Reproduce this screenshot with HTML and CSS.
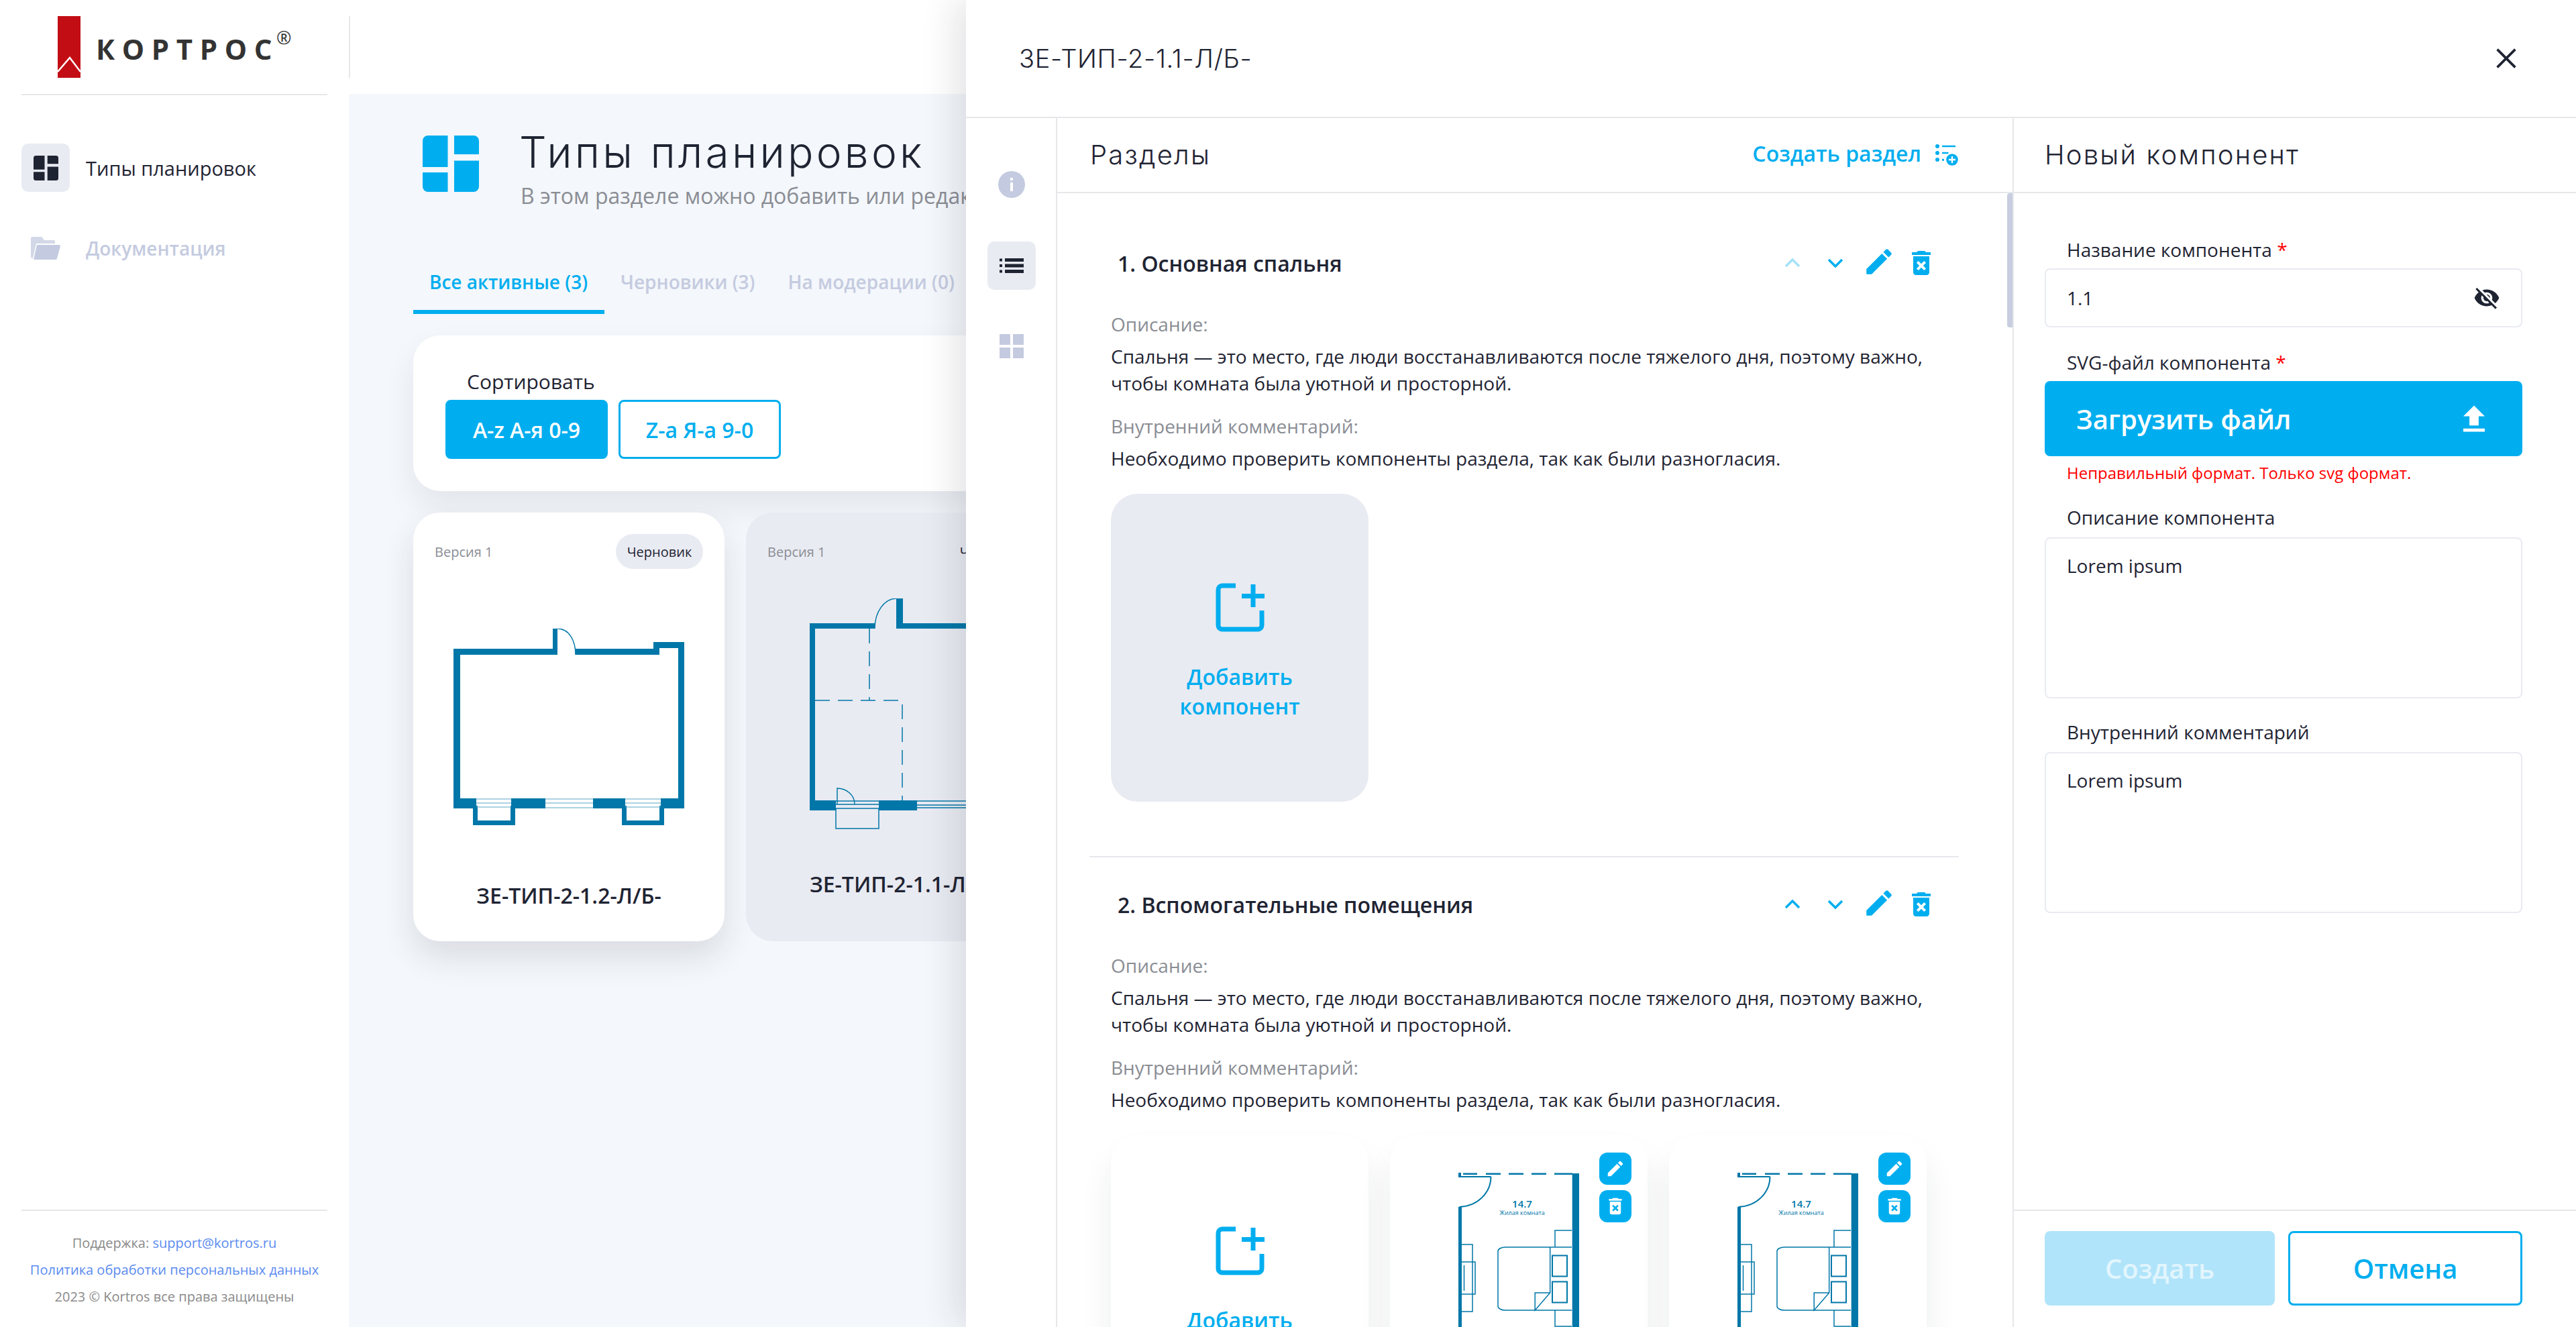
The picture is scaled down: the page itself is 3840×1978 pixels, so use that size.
FILE: index.html
```html
<!DOCTYPE html>
<html lang="ru">
<head>
<meta charset="utf-8">
<title>Типы планировок</title>
<link rel="stylesheet" href="styles.css">
</head>
<body>
<svg class="defs" width="0" height="0">
  <symbol id="i-edit" viewBox="0 0 24 24"><path d="M3 17.25V21h3.75L17.81 9.94l-3.75-3.75L3 17.25zM20.71 7.04c.39-.39.39-1.02 0-1.41l-2.34-2.34c-.39-.39-1.02-.39-1.41 0l-1.83 1.83 3.75 3.75 1.83-1.83z"/></symbol>
  <symbol id="i-del" viewBox="4.5 2.5 15 19"><path d="M6 19c0 1.1.9 2 2 2h8c1.100 0 2-.9 2-2V7H6v12zm2.460-7.120l1.410-1.410L12 12.590l2.120-2.120 1.410 1.410L13.410 14l2.120 2.120-1.410 1.410L12 15.410l-2.120 2.120-1.410-1.410L10.590 14l-2.130-2.120zM15.500 4l-1-1h-5l-1 1H5v2h14V4z"/></symbol>
  <symbol id="i-add" viewBox="0 0 73 73"><path d="M30 4H10a6 6 0 0 0-6 6v53a6 6 0 0 0 6 6h53a6 6 0 0 0 6-6V41" fill="none" stroke="currentColor" stroke-width="7"/><path d="M39 16h34v7H39zM52.500 2h7v34h-7z"/></symbol>
  <symbol id="i-layout" viewBox="0 0 84 84"><path d="M8 0h29.500v47H0V8a8 8 0 0 1 8-8zM47 0h29a8 8 0 0 1 8 8v20H47zM47 37.500h37V76a8 8 0 0 1-8 8H47zM0 55h37.500v29H8a8 8 0 0 1-8-8z"/></symbol>
  <symbol id="i-room" viewBox="0 0 384 300">
    <g fill="none" stroke="#0077a8" stroke-width="2">
      <path d="M102 62h48.500M150.500 62c0 24-20 44-47 45"/>
      <path d="M109 57.700h21M143 57.700h22M177 57.700h22M211 57.700h22M245 57.700h27" stroke-width="2.500"/>
      <path d="M107 163h16v100h-16M107 189h20v48h-20M110.500 194v38" stroke-width="1.500"/>
      <path d="M246 167v-25h25M246 261v24h25M271 167h-99a11 6 0 0 0-11 6v82a11 6 0 0 0 11 6h99M238.700 167v68l-22.500 26v-26h22.500" stroke-width="1.500"/>
      <path d="M242 179.500h22v31h-22zM242 218.500h22v31h-22z"/>
    </g>
    <path d="M102 56h4v7h-4zM102 107h5v193h-5zM271.700 57h10.300v243h-10.300z" fill="#0077a8"/>
  </symbol>
</svg>

<div class="app">
  <aside class="sidebar">
    <div class="logo">
      <svg class="logo-mark" viewBox="0 0 34 92"><rect width="34" height="92" fill="#c30d15"/><path d="M0 83 18 62 34 83" fill="none" stroke="#fff" stroke-width="2.500"/></svg>
      <div class="logo-word">КОРТРОС<span class="logo-reg">®</span></div>
    </div>
    <nav class="nav">
      <a class="nav-item nav-active">
        <span class="nav-box"><svg class="nav-ico-dark"><use href="#i-layout"/></svg></span>
        <span>Типы планировок</span>
      </a>
      <a class="nav-item nav-muted">
        <span class="nav-box nav-box-plain"><svg class="nav-folder" viewBox="0 0 44 34"><path d="M2 0h14l4 5h14a2 2 0 0 1 2 2v3H8L3 32H2a2 2 0 0 1-2-2V2a2 2 0 0 1 2-2z" opacity=".75"/><path d="M9 12h33a2 2 0 0 1 2 2l-5 18a2 2 0 0 1-2 2H4z"/></svg></span>
        <span>Документация</span>
      </a>
    </nav>
    <footer class="side-foot">
      <p>Поддержка: <a class="link">support@kortros.ru</a></p>
      <p><a class="link">Политика обработки персональных данных</a></p>
      <p>2023 © Kortros все права защищены</p>
    </footer>
  </aside>

  <div class="content">
    <div class="topbar"><span class="topbar-rule"></span></div>
    <main class="main">
      <header class="page-head">
        <svg class="page-ico"><use href="#i-layout"/></svg>
        <div>
          <h1 class="page-title">Типы планировок</h1>
          <p class="page-sub">В этом разделе можно добавить или редактировать типы планировок</p>
        </div>
      </header>
      <div class="tabs">
        <a class="tab tab-active">Все активные (3)</a>
        <a class="tab">Черновики (3)</a>
        <a class="tab">На модерации (0)</a>
      </div>
      <section class="sort-card">
        <div class="sort-label">Сортировать</div>
        <div class="sort-btns">
          <button class="sort-btn sort-on">A-z А-я 0-9</button>
          <button class="sort-btn">Z-a Я-а 9-0</button>
        </div>
      </section>
      <div class="cards">
        <article class="card card-white">
          <div class="card-top"><span class="card-ver">Версия 1</span><span class="badge">Черновик</span></div>
          <svg class="plan plan-a" viewBox="676 937 344 293">
            <g fill="#0077a8">
              <path d="M676 967h148v-30h7v39h-145v214h24v15h-34zM858 967h116v-10h46v248h-35v-15h26V966h-28v10h-125zM762 1190h51v15h-51zM884 1190h48v15h-48z"/>
            </g>
            <path d="M831 937c16 0 27 16 27 39" fill="none" stroke="#0077a8" stroke-width="1.500"/>
            <g fill="none" stroke="#0077a8" stroke-width="7">
              <path d="M708.500 1201v25.500h56V1201M930.500 1201v25.500h56V1201"/>
            </g>
            <g fill="none" stroke="#5aa6c6" stroke-width="1.200">
              <path d="M710 1191h52M710 1197h52M710 1203h52M813 1191h71M813 1197h71M813 1204h71M932 1191h53M932 1197h53M932 1203h53"/>
            </g>
          </svg>
          <h3 class="card-name">ЗЕ-ТИП-2-1.2-Л/Б-</h3>
        </article>
        <article class="card card-grey">
          <div class="card-top"><span class="card-ver">Версия 1</span><span class="badge badge-grey">Черновик</span></div>
          <svg class="plan plan-b" viewBox="1207 892 360 344">
            <path fill="#0077a8" d="M1207 929h97v8h-89v256h31v15h-39zM1336 892h10v37h221v8h-221v0h-10zM1310 1193h57v15h-57z"/>
            <g fill="none" stroke="#0077a8" stroke-width="1.500">
              <path d="M1304 937c0-25 14-45 33-45"/>
              <path d="M1246 1205h64v30h-64zM1248 1199v-24c14 0 26 10 26 24M1246 1194h64M1246 1199h64M1367 1194h200M1367 1200h200M1367 1204h200"/>
              <path d="M1296 937v107M1215 1044h130v149" stroke-dasharray="22 12"/>
            </g>
          </svg>
          <h3 class="card-name card-name-b">ЗЕ-ТИП-2-1.1-Л/Б-</h3>
        </article>
      </div>
    </main>
  </div>

  <div class="drawer">
    <header class="drawer-head">
      <h2 class="drawer-title">ЗЕ-ТИП-2-1.1-Л/Б-</h2>
      <svg class="close" viewBox="0 0 28 28"><path d="M1.500 1.500l25 25M26.500 1.500l-25 25" stroke="#1f2433" stroke-width="3.500" fill="none"/></svg>
    </header>
    <div class="drawer-body">
      <div class="rail">
        <svg class="rail-info" viewBox="0 0 40 40"><circle cx="20" cy="20" r="20" fill="#c4cbe0"/><path d="M18 17h4v13h-4zM18 10h4v4h-4z" fill="#fff"/></svg>
        <span class="rail-box"><svg class="rail-list" viewBox="0 0 36 22"><path d="M0 .5h4v4H0zM0 9h4v4H0zM0 17.500h4v4H0zM8 0h28v5H8zM8 8.500h28v5H8zM8 17h28v5H8z"/></svg></span>
        <svg class="rail-grid" viewBox="0 0 36 36"><path d="M0 0h16v16H0zM20 0h16v16H20zM0 20h16v16H0zM20 20h16v16H20z"/></svg>
      </div>

      <div class="sections">
        <div class="subhead">
          <h3 class="subhead-title">Разделы</h3>
          <a class="create-link">Создать раздел
            <svg class="create-ico" viewBox="0 0 34 32"><circle cx="3" cy="3" r="3"/><circle cx="3" cy="13" r="3"/><circle cx="3" cy="23" r="3"/><path d="M10 1.700h20v2.600H10zM10 11.700h9.500v2.600H10zM10 21.800h3v3h-3z"/><circle cx="25" cy="23" r="8.800"/><path d="M23.800 18h2.400v10h-2.400zM20 21.800h10v2.400H20z" fill="#fff"/></svg>
          </a>
        </div>
        <div class="scroll-thumb"></div>
        <div class="sections-list">
          <section class="sec">
            <div class="sec-head">
              <h4 class="sec-title">1. Основная спальня</h4>
              <div class="sec-tools">
                <svg class="chev chev-off" viewBox="0 0 24 14"><path d="M2 12 12 2l10 10" fill="none" stroke="currentColor" stroke-width="3.500"/></svg>
                <svg class="chev" viewBox="0 0 24 14"><path d="M2 2l10 10L22 2" fill="none" stroke="currentColor" stroke-width="3.500"/></svg>
                <svg class="tool-edit"><use href="#i-edit"/></svg>
                <svg class="tool-del"><use href="#i-del"/></svg>
              </div>
            </div>
            <div class="sec-text">
              <p class="muted">Описание:</p>
              <p>Спальня — это место, где люди восстанавливаются после тяжелого дня, поэтому важно,<br>чтобы комната была уютной и просторной.</p>
              <p class="muted gap">Внутренний комментарий:</p>
              <p>Необходимо проверить компоненты раздела, так как были разногласия.</p>
            </div>
            <div class="tiles">
              <a class="tile tile-add tile-grey">
                <svg class="add-ico"><use href="#i-add"/></svg>
                <span>Добавить<br>компонент</span>
              </a>
            </div>
          </section>

          <section class="sec sec-2">
            <div class="sec-head">
              <h4 class="sec-title">2. Вспомогательные помещения</h4>
              <div class="sec-tools">
                <svg class="chev" viewBox="0 0 24 14"><path d="M2 12 12 2l10 10" fill="none" stroke="currentColor" stroke-width="3.500"/></svg>
                <svg class="chev" viewBox="0 0 24 14"><path d="M2 2l10 10L22 2" fill="none" stroke="currentColor" stroke-width="3.500"/></svg>
                <svg class="tool-edit"><use href="#i-edit"/></svg>
                <svg class="tool-del"><use href="#i-del"/></svg>
              </div>
            </div>
            <div class="sec-text">
              <p class="muted">Описание:</p>
              <p>Спальня — это место, где люди восстанавливаются после тяжелого дня, поэтому важно,<br>чтобы комната была уютной и просторной.</p>
              <p class="muted gap">Внутренний комментарий:</p>
              <p>Необходимо проверить компоненты раздела, так как были разногласия.</p>
            </div>
            <div class="tiles tiles-2">
              <a class="tile tile-add tile-white">
                <svg class="add-ico add-ico-2"><use href="#i-add"/></svg>
                <span>Добавить<br>компонент</span>
              </a>
              <div class="tile tile-white tile-room">
                <svg class="room" viewBox="0 0 384 300"><use href="#i-room"/><text x="197" y="108" class="room-num">14.7</text><text x="197" y="119" class="room-name">Жилая комната</text></svg>
                <span class="mini mini-1"><svg class="mini-ico"><use href="#i-edit"/></svg></span>
                <span class="mini mini-2"><svg class="mini-ico mini-del"><use href="#i-del"/></svg></span>
              </div>
              <div class="tile tile-white tile-room">
                <svg class="room" viewBox="0 0 384 300"><use href="#i-room"/><text x="197" y="108" class="room-num">14.7</text><text x="197" y="119" class="room-name">Жилая комната</text></svg>
                <span class="mini mini-1"><svg class="mini-ico"><use href="#i-edit"/></svg></span>
                <span class="mini mini-2"><svg class="mini-ico mini-del"><use href="#i-del"/></svg></span>
              </div>
            </div>
          </section>
        </div>
      </div>

      <div class="form-panel">
        <div class="subhead subhead-form">
          <h3 class="subhead-title">Новый компонент</h3>
        </div>
        <form class="form">
          <label class="f-label f-first">Название компонента <b class="req">*</b></label>
          <div class="f-input"><span>1.1</span>
            <svg class="eye" viewBox="0 0 24 24"><path d="M12 7c2.760 0 5 2.240 5 5 0 .65-.13 1.260-.36 1.830l2.920 2.920c1.510-1.260 2.700-2.890 3.430-4.750-1.730-4.390-6-7.500-11-7.500-1.400 0-2.740.25-3.980.7l2.160 2.160C10.740 7.130 11.350 7 12 7zM2 4.270l2.280 2.280.46.46C3.080 8.300 1.780 10.020 1 12c1.730 4.390 6 7.500 11 7.500 1.550 0 3.030-.3 4.380-.84l.42.42L19.730 22 21 20.730 3.270 3 2 4.270zM7.530 9.800l1.550 1.550c-.05.21-.08.43-.08.65 0 1.660 1.340 3 3 3 .22 0 .44-.03.65-.08l1.550 1.550c-.67.33-1.410.53-2.200.53-2.760 0-5-2.240-5-5 0-.79.2-1.530.53-2.200zm4.310-.78l3.150 3.150.02-.16c0-1.660-1.340-3-3-3l-.17.01z"/></svg>
          </div>
          <label class="f-label f-next">SVG-файл компонента <b class="req">*</b></label>
          <button type="button" class="upload">Загрузить файл
            <svg class="upload-ico" viewBox="5 3 14 17"><path d="M9 16h6v-6h4l-7-7-7 7h4zm-4 2h14v2H5z"/></svg>
          </button>
          <p class="f-error">Неправильный формат. Только svg формат.</p>
          <label class="f-label f-desc">Описание компонента</label>
          <div class="f-area">Lorem ipsum</div>
          <label class="f-label f-next2">Внутренний комментарий</label>
          <div class="f-area">Lorem ipsum</div>
        </form>
        <div class="form-foot">
          <button type="button" class="foot-btn foot-create">Создать</button>
          <button type="button" class="foot-btn foot-cancel">Отмена</button>
        </div>
      </div>
    </div>
  </div>
</div>
</body>
</html>
```

FILE: styles.css
```css
* { box-sizing: border-box; }
html, body { margin: 0; padding: 0; }
body { font-family: "Open Sans", "Noto Sans", sans-serif; color: #1f2433; background: #fff; }
h1, h2, h3, h4, p { margin: 0; font-weight: inherit; }
.defs { position: absolute; }
svg { display: block; fill: currentColor; }
button { font-family: inherit; cursor: pointer; }

.app { position: relative; width: 3840px; height: 1978px; overflow: hidden; display: flex; }

/* sidebar */
.sidebar { width: 520px; height: 100%; flex: none; display: flex; flex-direction: column; padding: 0 32px; background: #fff; }
.logo { height: 142px; border-bottom: 2px solid #e6e7ea; display: flex; align-items: flex-start; padding: 24px 0 0 54px; gap: 23px; }
.logo-mark { width: 34px; height: 92px; flex: none; }
.logo-word { display: flex; margin-top: 26px; font-size: 42px; line-height: 46px; font-weight: 700; letter-spacing: 10.600px; color: #333; white-space: nowrap; }
.logo-reg { font-size: 27px; font-weight: 400; letter-spacing: 0; line-height: 24px; margin: -6px 0 0 -4px; }
.nav { padding-top: 72px; display: flex; flex-direction: column; gap: 48px; }
.nav-item { display: flex; align-items: center; gap: 24px; height: 72px; font-size: 29px; font-weight: 500; color: #1f2433; }
.nav-muted { color: #c4cbe0; font-size: 28px; font-weight: 600; }
.nav-box { width: 72px; height: 72px; border-radius: 10px; background: #e9ebf2; display: flex; align-items: center; justify-content: center; flex: none; }
.nav-box-plain { background: none; }
.nav-ico-dark { width: 37px; height: 37px; color: #1f2433; }
.nav-folder { width: 44px; height: 34px; color: #c4cbe0; }
.side-foot { margin-top: auto; margin-bottom: 25px; padding-top: 28px; border-top: 2px solid #e6e7ea; text-align: center; font-size: 20px; line-height: 40px; color: #8a8a8a; white-space: nowrap; }
.link { color: #5b8bf0; }

/* main page */
.content { flex: 1; display: flex; flex-direction: column; min-width: 0; }
.topbar { height: 140px; flex: none; padding-top: 24px; background: #fff; }
.topbar-rule { display: block; width: 2px; height: 92px; background: #e6e7ea; }
.main { flex: 1; background: #f4f7fb; padding: 62px 0 0 96px; }
.page-head { display: flex; gap: 62px; margin-left: 14px; }
.page-ico { width: 84px; height: 84px; flex: none; color: #00aeef; }
.page-title { font-family: Inter, "Open Sans", sans-serif; font-weight: 300; font-size: 64px; letter-spacing: 4.200px; line-height: 70px; margin: -10px 0 0 -2px; color: #1f2433; white-space: nowrap; }
.page-sub { font-size: 32px; line-height: 46px; color: #8a8d94; margin-top: 7px; white-space: nowrap; }
.tabs { display: flex; margin-top: 85px; height: 68px; }
.tab { padding: 0 25px 0 24px; font-size: 28px; line-height: 40px; font-weight: 600; color: #c4cbe0; white-space: nowrap; }
.tab-active { color: #00aeef; border-bottom: 6px solid #00aeef; }
.sort-card { width: 1200px; height: 232px; margin-top: 32px; background: #fff; border-radius: 40px; padding: 47px 48px 0; box-shadow: 0 24px 48px rgba(31, 36, 51, .08); }
.sort-label { padding-left: 32px; font-size: 30px; line-height: 44px; color: #1f2433; }
.sort-btns { display: flex; gap: 16px; margin-top: 5px; }
.sort-btn { width: 242px; height: 88px; border-radius: 8px; border: 3px solid #00aeef; background: #fff; color: #00aeef; font-size: 32px; font-weight: 600; }
.sort-on { background: #00aeef; color: #fff; }
.cards { display: flex; gap: 32px; margin-top: 32px; }
.card { width: 464px; height: 639px; border-radius: 40px; flex: none; padding: 32px; display: flex; flex-direction: column; align-items: center; }
.card-white { background: #fff; box-shadow: 0 24px 48px rgba(31, 36, 51, .12); }
.card-grey { background: #e9ebf2; }
.card-top { width: 100%; height: 52px; display: flex; justify-content: space-between; align-items: center; }
.card-ver { font-size: 20px; color: #8a8d94; }
.badge { width: 130px; height: 52px; border-radius: 26px; background: #e9ebf2; display: flex; align-items: center; justify-content: center; font-size: 20px; color: #1f2433; }
.badge-grey { background: transparent; }
.plan { flex: none; }
.plan-a { width: 344px; height: 293px; margin-top: 89px; }
.plan-b { width: 360px; height: 344px; margin-top: 44px; align-self: flex-start; margin-left: 63px; }
.card-name { font-size: 32px; line-height: 44px; font-weight: 600; color: #1f2433; white-space: nowrap; margin-top: 83px; }
.card-name-b { margin-top: 60px; align-self: flex-start; margin-left: 63px; }

/* drawer */
.drawer { position: absolute; top: 0; right: 0; bottom: 0; left: 1440px; background: #fff; display: flex; flex-direction: column; box-shadow: -16px 0 48px rgba(31, 36, 51, .12); }
.drawer-head { height: 176px; flex: none; border-bottom: 2px solid #e6e7ea; display: flex; align-items: center; justify-content: space-between; padding: 0 89px 0 79px; }
.drawer-title { font-family: Inter, "Open Sans", sans-serif; font-weight: 300; font-size: 38px; letter-spacing: .7px; line-height: 50px; color: #1f2433; white-space: nowrap; }
.close { width: 30px; height: 30px; }
.drawer-body { flex: 1; display: flex; min-height: 0; }
.rail { width: 136px; flex: none; border-right: 2px solid #e6e7ea; display: flex; flex-direction: column; align-items: center; padding: 79px 0 0 2px; }
.rail-info { width: 40px; height: 40px; }
.rail-box { width: 72px; height: 72px; border-radius: 10px; background: #e9ebf2; display: flex; align-items: center; justify-content: center; margin-top: 65px; }
.rail-list { width: 36px; height: 22px; color: #1f2433; }
.rail-grid { width: 36px; height: 36px; margin-top: 66px; color: #c4cbe0; }

.sections { position: relative; width: 1426px; flex: none; border-right: 2px solid #e6e7ea; display: flex; flex-direction: column; min-height: 0; overflow: hidden; }
.subhead { height: 112px; flex: none; border-bottom: 2px solid #e6e7ea; display: flex; align-items: center; justify-content: space-between; padding: 0 81px 0 49px; }
.subhead-title { font-family: Inter, "Open Sans", sans-serif; font-weight: 300; font-size: 40px; letter-spacing: 2.200px; line-height: 50px; color: #1f2433; white-space: nowrap; }
.create-link { display: flex; align-items: center; gap: 21px; font-size: 32px; font-weight: 600; color: #00aeef; margin-top: -6px; white-space: nowrap; }
.create-ico { width: 34px; height: 32px; margin-top: 6px; }
.scroll-thumb { position: absolute; top: 112px; right: 0; width: 8px; height: 200px; border-radius: 4px 0 0 4px; background: #c8cee0; }
.sections-list { padding: 0 0 0 48px; }
.sec { width: 1296px; }
.sec-2 { border-top: 2px solid #e6e7ea; }
.sec-head { display: flex; align-items: center; justify-content: space-between; height: 44px; margin: 82px 0 0; padding: 0 40px 0 42px; }
.sec-2 .sec-head { margin-top: 48px; }
.sec-title { font-size: 32px; font-weight: 600; color: #1f2433; white-space: nowrap; }
.sec-tools { display: flex; align-items: center; }
.chev { width: 24px; height: 14px; color: #00aeef; margin-right: 40px; }
.chev-off { opacity: .35; }
.tool-edit { width: 50px; height: 50px; color: #00aeef; margin: -4px 0 0 -12px; }
.tool-del { width: 32px; height: 38px; color: #00aeef; margin-left: 22px; }
.sec-text { padding: 0 32px; margin-top: 49px; font-size: 28px; line-height: 40px; color: #1f2433; }
.muted { color: #8a8d94; margin-bottom: 8px; }
.gap { margin-top: 24px; }
.tiles { display: flex; gap: 32px; margin: 33px 0 0 32px; padding-bottom: 81px; }
.tile { position: relative; width: 384px; height: 459px; border-radius: 40px; flex: none; }
.tile-add { display: flex; flex-direction: column; align-items: center; padding-top: 133px; color: #00aeef; font-size: 32px; line-height: 44px; font-weight: 600; text-align: center; }
.add-ico { width: 73px; height: 73px; margin-bottom: 45px; }
.add-ico-2 { margin-top: 3px; }
.tile-grey { background: #e9ebf2; }
.tile-white { background: #fff; box-shadow: 0 32px 48px rgba(31, 36, 51, .08); }
.room { width: 384px; height: 300px; }
.room-num { font: 600 15px "Open Sans", sans-serif; text-anchor: middle; fill: #0077a8; }
.room-name { font: 400 9px "Open Sans", sans-serif; text-anchor: middle; fill: #0077a8; }
.mini { position: absolute; right: 24px; width: 48px; height: 48px; border-radius: 12px; background: #00aeef; display: flex; align-items: center; justify-content: center; }
.mini-1 { top: 26px; }
.mini-2 { top: 82px; }
.mini-ico { width: 30px; height: 30px; color: #fff; }
.mini-del { width: 22px; height: 26px; }

/* form */
.form-panel { flex: 1; display: flex; flex-direction: column; min-width: 0; }
.subhead-form { padding: 0 46px; }
.form { flex: 1; padding: 0 80px 0 46px; }
.f-label { display: block; padding-left: 33px; font-size: 28px; line-height: 40px; color: #1f2433; }
.f-first { margin-top: 64px; }
.f-next { margin-top: 32px; }
.f-next2 { margin-top: 30px; }
.f-desc { margin-top: 29px; }
.req { color: #f00; font-weight: 400; }
.f-input { height: 88px; margin-top: 8px; border: 2px solid #e9ebf2; border-radius: 8px; display: flex; align-items: center; justify-content: space-between; padding: 0 31px; font-size: 28px; }
.eye { width: 40px; height: 40px; color: #1f2433; }
.upload { width: 100%; height: 112px; margin-top: 8px; border: 0; border-radius: 8px; background: #00aeef; color: #fff; display: flex; align-items: center; justify-content: space-between; padding: 0 56px 0 47px; font-size: 40px; font-weight: 600; }
.upload-ico { width: 32px; height: 40px; }
.f-error { padding-left: 33px; margin-top: 8px; font-size: 24px; line-height: 34px; color: #f00; }
.f-area { height: 240px; margin-top: 10px; border: 2px solid #e9ebf2; border-radius: 8px; padding: 20px 31px; font-size: 28px; line-height: 40px; }
.form-foot { height: 175px; flex: none; border-top: 2px solid #e6e7ea; display: flex; gap: 20px; padding: 30px 80px 0 46px; }
.foot-btn { flex: 1; height: 111px; border-radius: 8px; font-size: 40px; font-weight: 600; border: 3px solid #00aeef; background: #fff; color: #00aeef; }
.foot-create { border: 0; background: #b0e4fa; color: #e2f5fd; }
```
